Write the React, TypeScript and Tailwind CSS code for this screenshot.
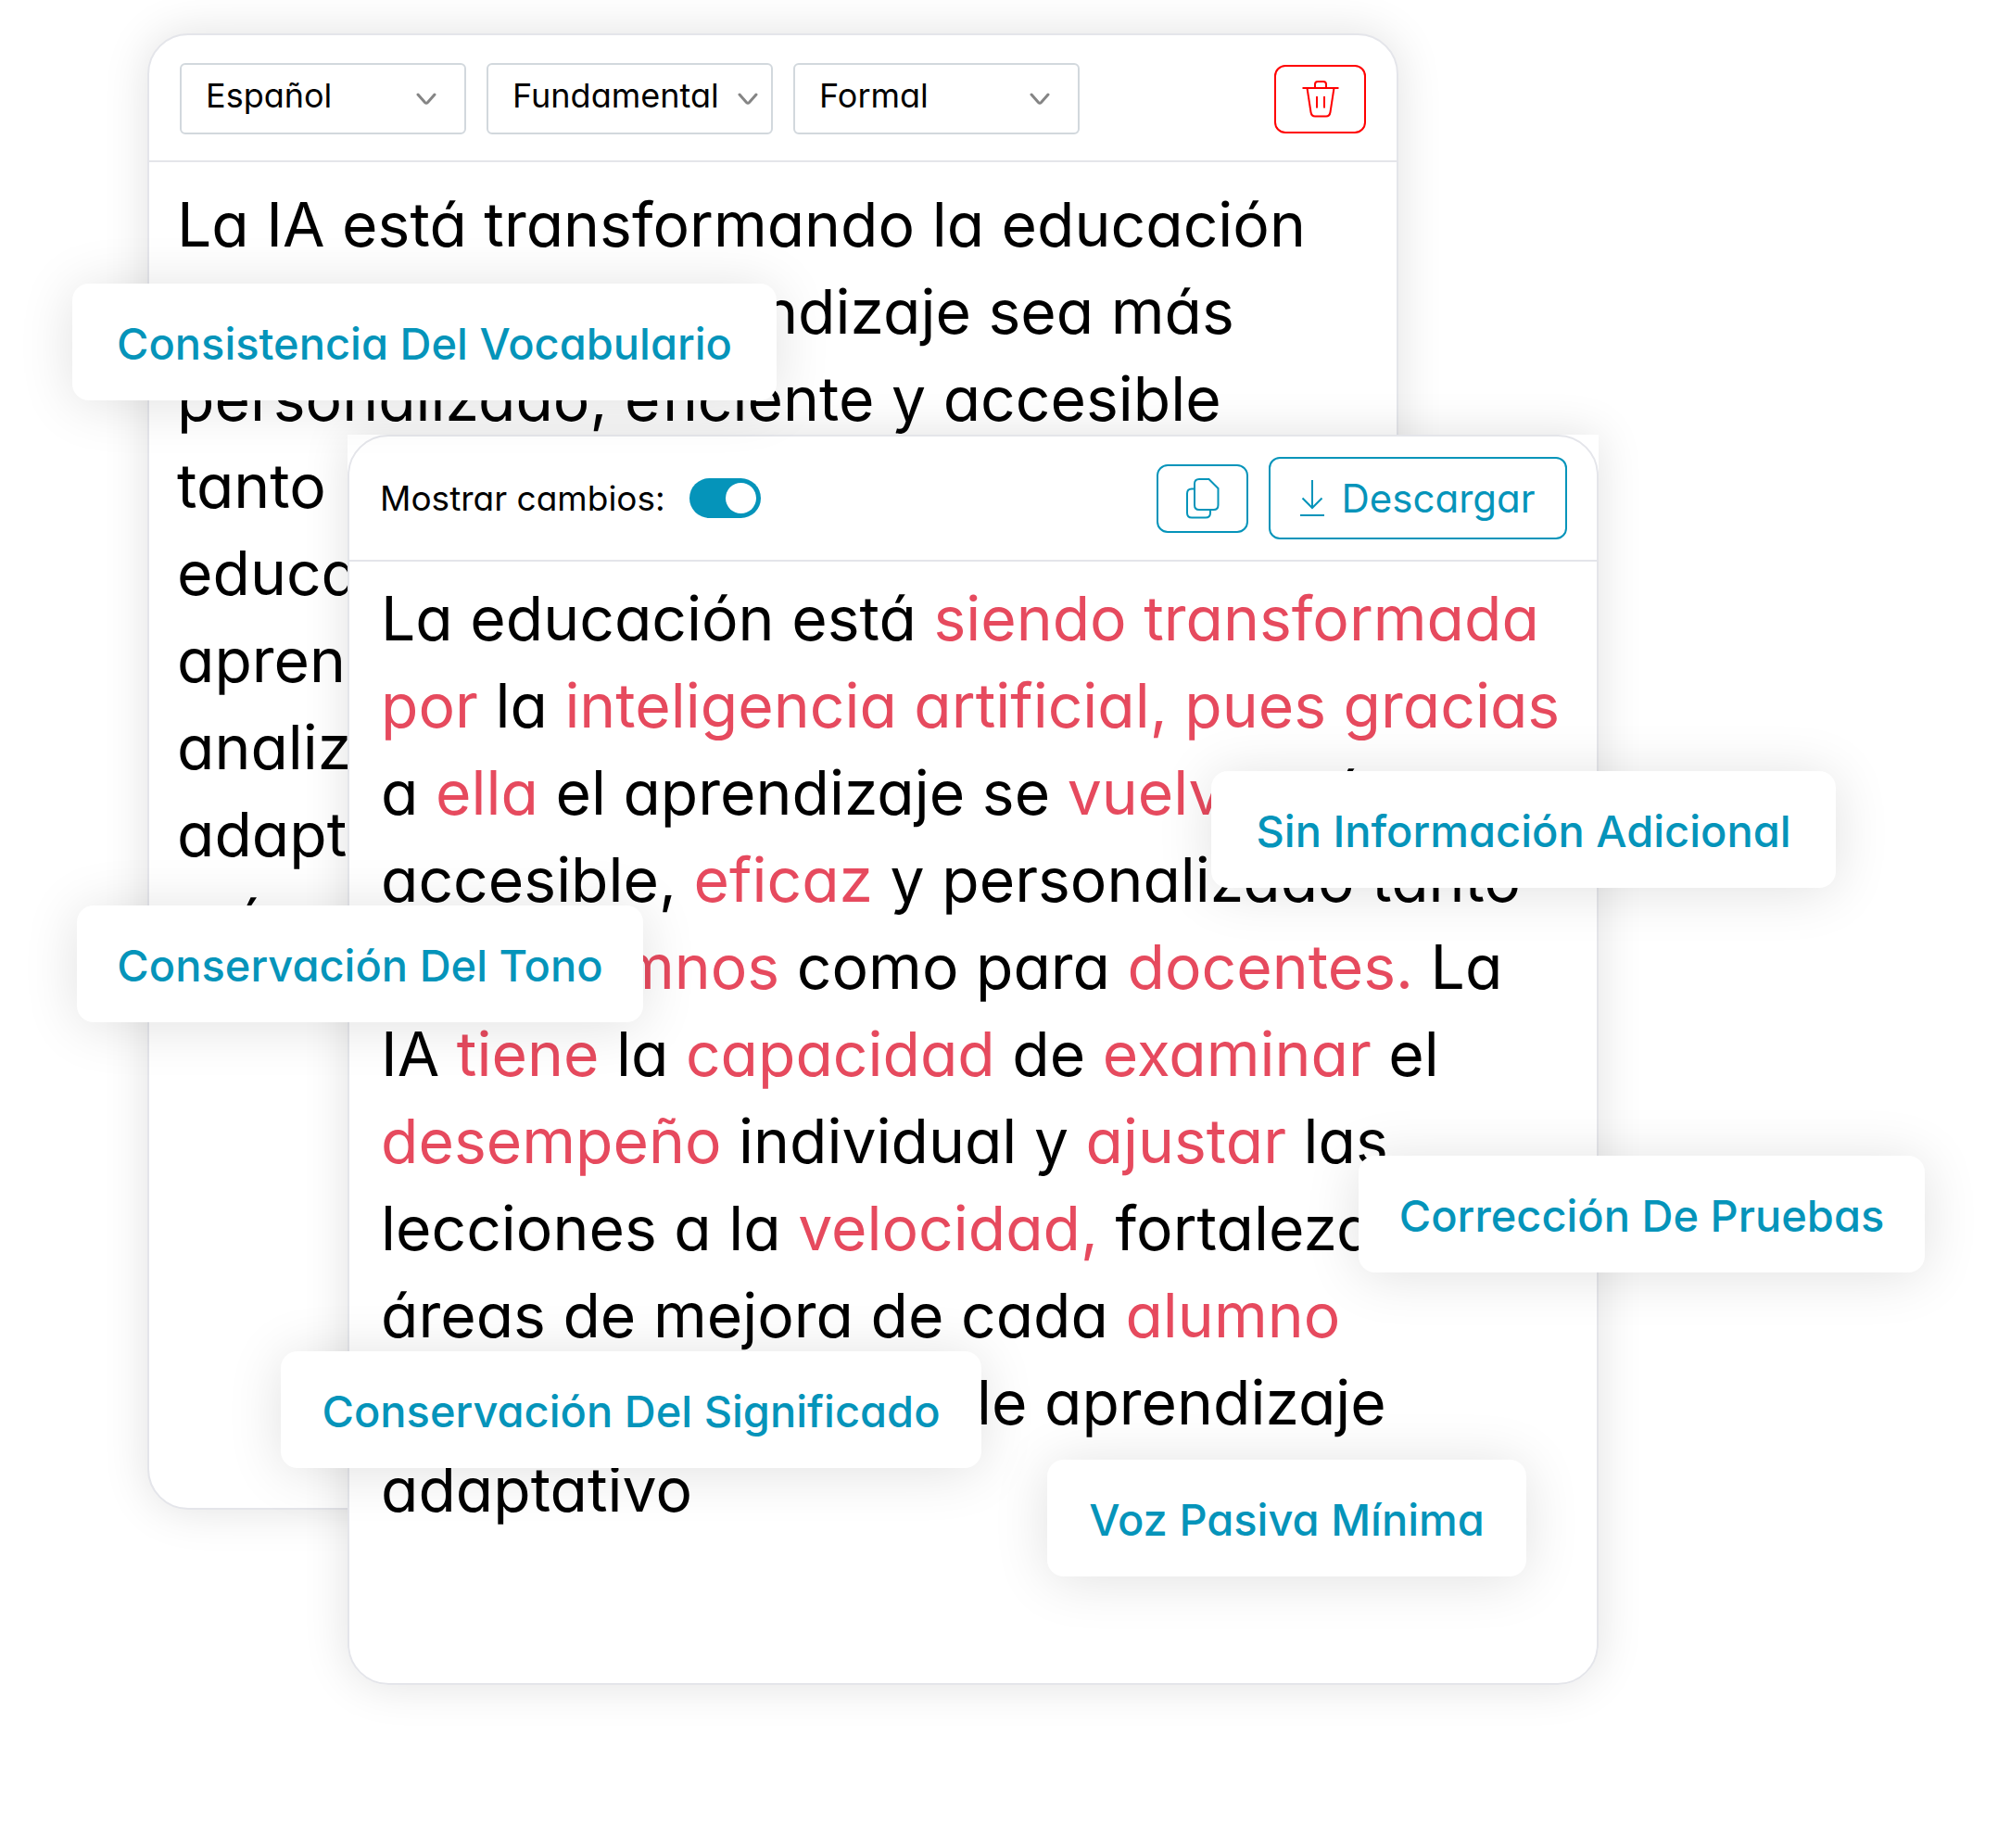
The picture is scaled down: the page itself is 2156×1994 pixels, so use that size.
import { useState } from "react";

const languages = ["Español", "Inglés", "Francés"];
const modes = ["Fundamental", "Avanzado", "Creativo"];
const tones = ["Formal", "Informal", "Neutral"];

const original = [
  "La IA está transformando la educación",
  "al lograr que el aprendizaje sea más",
  "personalizado, eficiente y accesible",
  "tanto para estudiantes como para",
  "educadores. Las plataformas de",
  "aprendizaje con IA pueden",
  "analizar el rendimiento y",
  "adaptar las lecciones al",
  "más alto nivel de cada uno",
];

// words between asterisks are the ones that changed
const rewritten = [
  "La educación está *siendo transformada*",
  "*por* la *inteligencia artificial, pues gracias*",
  "a *ella* el aprendizaje se *vuelve* más",
  "accesible, *eficaz* y personalizado tanto",
  "para *alumnos* como para *docentes.* La",
  "IA *tiene* la *capacidad* de *examinar* el",
  "*desempeño* individual y *ajustar* las",
  "lecciones a la *velocidad,* fortalezas y",
  "áreas de mejora de cada *alumno*",
  "gracias a un medio de aprendizaje",
  "adaptativo",
];

const features = [
  { label: "Consistencia Del Vocabulario", place: "left-[78px] top-[306px] w-[760px]" },
  { label: "Sin Información Adicional", place: "left-[1307px] top-[832px] w-[674px]" },
  { label: "Conservación Del Tono", place: "left-[83px] top-[977px] w-[611px]" },
  { label: "Corrección De Pruebas", place: "left-[1466px] top-[1247px] w-[611px]" },
  { label: "Conservación Del Significado", place: "left-[303px] top-[1458px] w-[756px]" },
  { label: "Voz Pasiva Mínima", place: "left-[1130px] top-[1575px] w-[517px]" },
];

function Select({
  label,
  options,
  chevron,
}: {
  label: string;
  options: string[];
  chevron: string;
}) {
  return (
    <div className="relative w-[309px]">
      <select
        aria-label={label}
        className="h-[77px] w-full appearance-none rounded-md border-2 border-[#d2d8dd] bg-white pb-2 pl-[26px] text-[36px] text-black outline-none"
      >
        {options.map((option) => (
          <option key={option}>{option}</option>
        ))}
      </select>
      <svg
        viewBox="0 0 22 14"
        className={`pointer-events-none absolute top-8 h-[14px] w-[22px] ${chevron}`}
        fill="none"
        stroke="#858585"
        strokeWidth="3"
        strokeLinecap="round"
        strokeLinejoin="round"
      >
        <path d="M2 2l7.500 8.500q1.500 1.500 3 0L20 2" />
      </svg>
    </div>
  );
}

function TrashIcon() {
  return (
    <svg viewBox="0 0 40 40" className="size-10" fill="none" stroke="currentColor" strokeWidth="2">
      <path d="M0.500 8h39M14 8V4q0-3 3-3h6q3 0 3 3v4M5.500 8l4 26q.7 4.500 4.500 4.500h12q3.800 0 4.500-4.500l4-26M16 17v12.500M24 17v12.500" />
    </svg>
  );
}

function CopyIcon() {
  return (
    <svg viewBox="0 0 36 44" className="h-11 w-9" fill="none" stroke="currentColor" strokeWidth="2">
      <path d="M9 11.500H6q-5 0-5 5v21q0 5 5 5h15q5 0 5-5V34" />
      <path d="M14 1h10.500L34.500 11v18q0 5-5 5H14q-5 0-5-5V6q0-5 5-5z" />
    </svg>
  );
}

function DownloadIcon() {
  return (
    <svg viewBox="0 0 26 40" className="h-10 w-[26px]" fill="none" stroke="currentColor" strokeWidth="2">
      <path d="M13 0v30M2.500 19.500L13 30l10.500-10.500M0 38h26" />
    </svg>
  );
}

function Changes({ text, show }: { text: string; show: boolean }) {
  return (
    <span className="block">
      {text.split("*").map((part, i) => (
        <span key={i} className={i % 2 && show ? "text-[#e64a5e]" : ""}>
          {part}
        </span>
      ))}
    </span>
  );
}

export default function App() {
  const [showChanges, setShowChanges] = useState(true);

  return (
    <main className="relative grid bg-white pt-9 pb-[165px] font-['Inter','Open_Sans',sans-serif] text-black [font-feature-settings:'cv11']">
      <section className="col-start-1 row-start-1 mr-[647px] mb-[189px] ml-[159px] rounded-[44px] border-2 border-[#e4e5ea] bg-white shadow-[0_0_50px_rgba(0,0,0,0.12)]">
        <header className="flex items-center justify-between border-b-2 border-[#e4e5ea] px-[33px] pt-[30px] pb-7">
          <div className="flex gap-[22px]">
            <Select label="Idioma" options={languages} chevron="right-8" />
            <Select label="Modo" options={modes} chevron="right-4" />
            <Select label="Tono" options={tones} chevron="right-8" />
          </div>
          <button
            type="button"
            aria-label="Eliminar"
            className="flex h-[74px] w-[99px] cursor-pointer items-center justify-center rounded-xl border-2 border-[#ff0000] text-[#ff0000]"
          >
            <TrashIcon />
          </button>
        </header>
        <p className="px-[30px] pt-5 text-[66px] leading-[94px] whitespace-nowrap">
          {original.map((line) => (
            <span key={line} className="block">
              {line}
            </span>
          ))}
        </p>
      </section>

      <section className="z-10 col-start-1 row-start-1 mt-[433px] mr-[431px] ml-[375px] rounded-b-[44px] bg-white shadow-[0_0_50px_rgba(0,0,0,0.12)]">
        <div className="rounded-[44px] border-2 border-[#e4e5ea] pb-[162px]">
          <header className="flex items-center justify-between border-b-2 border-[#e4e5ea] py-[22px] pr-8 pl-[33px]">
            <label className="flex cursor-pointer items-center gap-[26px] text-[37px]">
              Mostrar cambios:
              <input
                type="checkbox"
                role="switch"
                checked={showChanges}
                onChange={(e) => setShowChanges(e.target.checked)}
                className="h-[43px] w-[77px] cursor-pointer appearance-none rounded-full bg-gray-300 p-[5px] before:block before:size-[33px] before:rounded-full before:bg-white checked:bg-[#0594ba] checked:before:ml-[34px]"
              />
            </label>
            <div className="flex items-center gap-[22px] text-[#0594ba]">
              <button
                type="button"
                aria-label="Copiar"
                className="flex h-[74px] w-[99px] cursor-pointer items-center justify-center rounded-xl border-2 border-[#0594ba]"
              >
                <CopyIcon />
              </button>
              <button
                type="button"
                className="flex h-[89px] w-[322px] cursor-pointer items-center justify-center gap-[18px] rounded-xl border-2 border-[#0594ba] text-[42px]"
              >
                <DownloadIcon />
                Descargar
              </button>
            </div>
          </header>
          <p className="px-[34px] pt-[14px] text-[66px] leading-[94px] whitespace-nowrap">
            {rewritten.map((line) => (
              <Changes key={line} text={line} show={showChanges} />
            ))}
          </p>
        </div>
      </section>

      {features.map((feature) => (
        <div
          key={feature.label}
          className={`absolute z-20 flex h-[126px] items-center justify-center rounded-[18px] bg-white pt-1 text-[47px] font-medium whitespace-nowrap text-[#0594ba] shadow-[0_4px_60px_rgba(0,0,0,0.12)] ${feature.place}`}
        >
          {feature.label}
        </div>
      ))}
    </main>
  );
}
